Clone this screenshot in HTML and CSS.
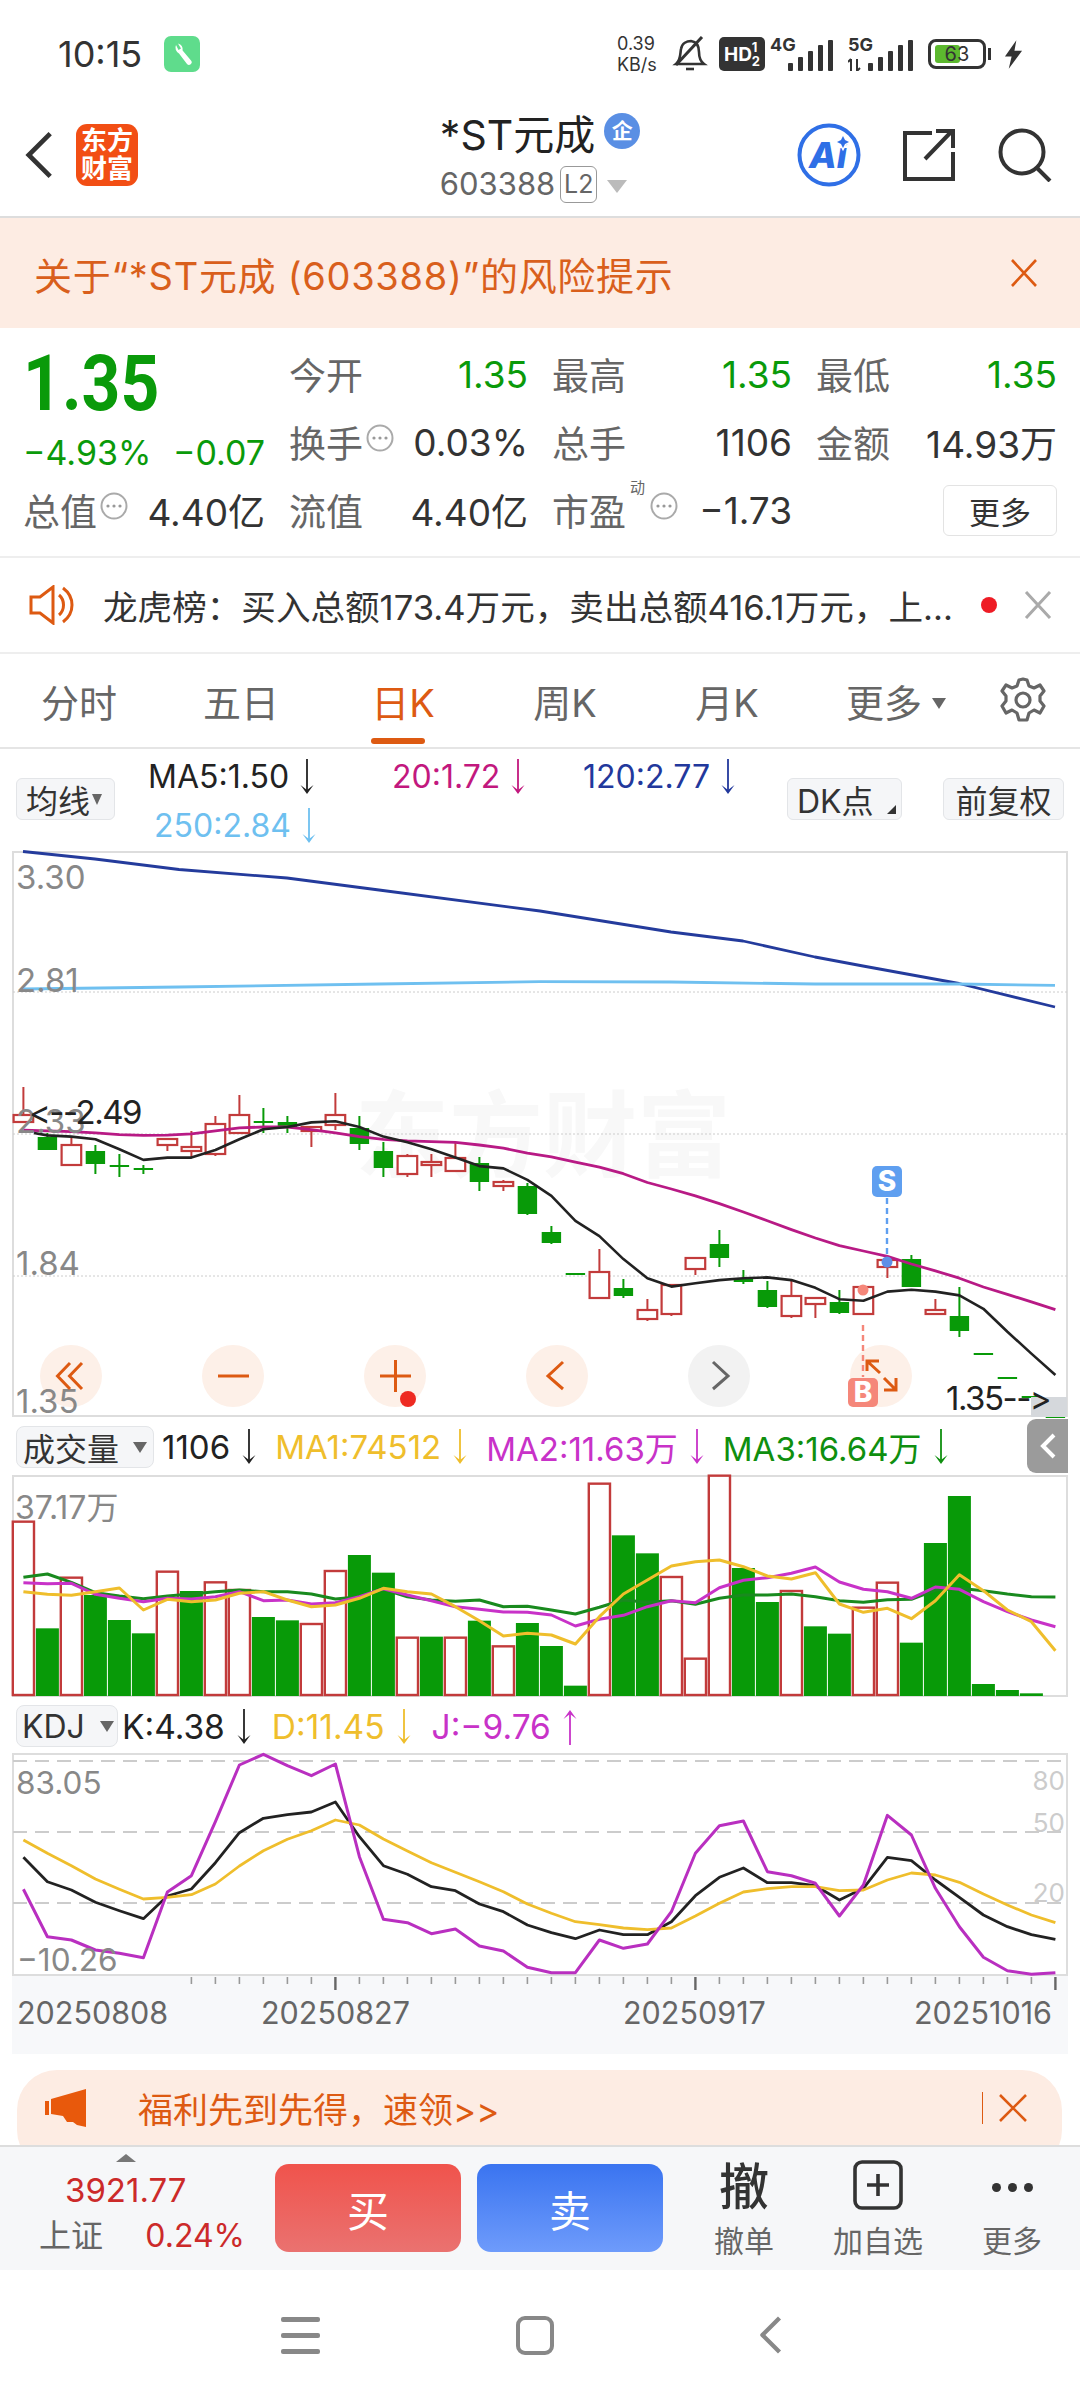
FILE: index.html
```html
<!DOCTYPE html>
<html lang="zh-CN">
<head>
    <meta charset="UTF-8">
    <meta name="viewport" content="width=device-width, initial-scale=1.0">
    <title>*ST元成 603388</title>
    <link rel="stylesheet" href="styles.css">
</head>
<body>
    <svg class="defs" width="0" height="0">
        <symbol id="arw-down" viewBox="0 0 14 36">
            <path d="M7 0V32" stroke="currentColor" stroke-width="1.8" fill="none"/>
            <path d="M0.5 26 L7 31 L13.5 26 L7 35Z" fill="currentColor"/>
        </symbol>
        <symbol id="arw-up" viewBox="0 0 14 36">
            <path d="M7 4V36" stroke="currentColor" stroke-width="1.8" fill="none"/>
            <path d="M0.5 10 L7 5 L13.5 10 L7 1Z" fill="currentColor"/>
        </symbol>
        <symbol id="more-dots" viewBox="0 0 28 28">
            <circle cx="14" cy="14" r="12.5" fill="none" stroke="#aaa" stroke-width="2"/>
            <circle cx="8" cy="14" r="1.6" fill="#999"/><circle cx="14" cy="14" r="1.6" fill="#999"/><circle cx="20" cy="14" r="1.6" fill="#999"/>
        </symbol>
    </svg>

    <!-- 状态栏 -->
    <div class="status-bar">
        <span class="time">10:15</span>
        <svg class="tool-icon" viewBox="0 0 36 36">
            <rect width="36" height="36" rx="7" fill="#5fdc8c"/>
            <path d="M12 9 a6.5 6.5 0 0 0 3 8.5 L23 28 a2.6 2.6 0 0 0 4-3.4 L18.6 14.5 A6.5 6.5 0 0 0 14 7.5 L17 12.5 L14.5 14Z" fill="#fff"/>
        </svg>
        <div class="status-right">
            <div class="speed"><span>0.39</span><span>KB/s</span></div>
            <svg class="st-bell" viewBox="0 0 36 36" fill="none" stroke="#333" stroke-width="2.6">
                <path d="M4 28 C9 24 8 18 9 13 C10 7 15 5 19 5 C25 6 27 11 27 16 C27 21 28 25 32 28Z"/>
                <path d="M14 33H22"/>
                <path d="M4 29 L30 1" stroke-width="3"/>
            </svg>
            <div class="hd-badge"><b>HD</b><i>1<br>2</i></div>
            <svg class="st-signal" viewBox="0 -4 65 38">
                <text x="0" y="14" class="sig-text">4G</text>
                <rect x="18" y="26" width="5" height="8" rx="1"/><rect x="28" y="20" width="5" height="14" rx="1"/><rect x="38" y="14" width="5" height="20" rx="1"/><rect x="48" y="8" width="5" height="26" rx="1"/><rect x="58" y="3" width="5" height="31" rx="1"/>
            </svg>
            <svg class="st-signal st-signal-5g" viewBox="0 -4 67 38">
                <text x="0" y="14" class="sig-text">5G</text>
                <path d="M3 34V22M0 25L3 22M9 22V34M12 31L9 34" stroke="#333" stroke-width="2" fill="none"/>
                <rect x="20" y="26" width="5" height="8" rx="1"/><rect x="30" y="20" width="5" height="14" rx="1"/><rect x="40" y="14" width="5" height="20" rx="1"/><rect x="50" y="8" width="5" height="26" rx="1"/><rect x="60" y="3" width="5" height="31" rx="1"/>
            </svg>
            <div class="battery"><div class="battery-fill"></div><span>63</span></div>
            <svg class="st-bolt" viewBox="0 0 20 30"><path d="M13 0 L1 17 H8 L5 30 L19 11 H11Z" fill="#333"/></svg>
        </div>
    </div>

    <!-- 标题栏 -->
    <div class="top-bar">
        <div class="top-left">
            <svg class="back-icon" viewBox="0 0 30 50"><path d="M27 2 L4 25 L27 48" fill="none" stroke="#333" stroke-width="5"/></svg>
            <div class="brand"><span>东方</span><span>财富</span></div>
        </div>
        <div class="top-title">
            <div class="title-line">*ST元成<span class="qi-badge">企</span></div>
            <div class="code-line">603388<span class="l2">L2</span><span class="code-arrow"></span></div>
        </div>
        <div class="top-right">
            <svg class="ai-icon" viewBox="0 0 64 64">
                <circle cx="32" cy="32" r="29.5" fill="#fff" stroke="#2f6fe6" stroke-width="4"/>
                <text x="12" y="45" class="ai-text">Ai</text>
                <path d="M46 13 L48 17 L52 19 L48 21 L46 25 L44 21 L40 19 L44 17Z" fill="#fff" stroke="#fff" stroke-width="3"/>
                <path d="M46 13 L48 17 L52 19 L48 21 L46 25 L44 21 L40 19 L44 17Z" fill="#2f6fe6"/>
            </svg>
            <svg class="share-icon" viewBox="0 0 54 54" fill="none" stroke="#333" stroke-width="4">
                <path d="M30 5 H3 V51 H51 V24"/>
                <path d="M23 31 L50 3 M34 3 H51 V20"/>
            </svg>
            <svg class="search-icon" viewBox="0 0 54 54" fill="none" stroke="#333" stroke-width="4">
                <circle cx="24" cy="24" r="21.5"/>
                <path d="M39 40 L52 53"/>
            </svg>
        </div>
    </div>

    <!-- 风险提示 -->
    <div class="risk-bar">
        <span>关于“*ST元成 (603388)”的风险提示</span>
        <svg class="risk-close" viewBox="0 0 28 28"><path d="M2 1 L26 27 M26 1 L2 27" stroke="#dd5a12" stroke-width="2.6"/></svg>
    </div>

    <!-- 行情数据 -->
    <div class="quote-grid">
        <div class="price-box">
            <div class="price">1.35</div>
            <div class="price-sub"><span>−4.93%</span><span>−0.07</span></div>
        </div>
        <div class="cell"><label>今开</label><span class="val green">1.35</span></div>
        <div class="cell"><label>最高</label><span class="val green">1.35</span></div>
        <div class="cell"><label>最低</label><span class="val green">1.35</span></div>
        <div class="cell"><label>换手<svg class="dot-icon"><use href="#more-dots"/></svg></label><span class="val">0.03%</span></div>
        <div class="cell"><label>总手</label><span class="val">1106</span></div>
        <div class="cell"><label>金额</label><span class="val">14.93万</span></div>
        <div class="cell"><label>总值<svg class="dot-icon"><use href="#more-dots"/></svg></label><span class="val">4.40亿</span></div>
        <div class="cell"><label>流值</label><span class="val">4.40亿</span></div>
        <div class="cell"><label>市盈<sup>动</sup><svg class="dot-icon"><use href="#more-dots"/></svg></label><span class="val">−1.73</span></div>
        <div class="cell cell-btn"><button class="more-btn">更多</button></div>
    </div>

    <!-- 公告滚动 -->
    <div class="notice-bar">
        <svg class="speaker" viewBox="0 0 46 40" fill="none" stroke="#dd5a12" stroke-width="3">
            <path d="M2 12 H11 L24 2 V38 L11 28 H2Z"/>
            <path d="M30 10 C36 15 36 25 30 30"/>
            <path d="M34 3 C46 12 46 28 34 37"/>
        </svg>
        <span class="notice-text">龙虎榜：买入总额173.4万元，卖出总额416.1万元，上...</span>
        <span class="notice-dot"></span>
        <svg class="notice-close" viewBox="0 0 28 28"><path d="M2 1 L26 27 M26 1 L2 27" stroke="#aaa" stroke-width="3"/></svg>
    </div>

    <!-- 周期切换 -->
    <div class="period-tabs">
        <div class="tab">分时</div>
        <div class="tab">五日</div>
        <div class="tab active"><span>日K</span></div>
        <div class="tab">周K</div>
        <div class="tab">月K</div>
        <div class="tab tab-more">更多<i class="tab-arrow"></i></div>
        <svg class="gear" viewBox="0 0 48 48" fill="none" stroke="#666" stroke-width="3.2" stroke-linejoin="round">
            <path d="M24 2 L28 3 L30 9 L35 11 L41 8 L45 14 L41 19 L41 24 L45 29 L41 36 L35 33 L30 36 L28 43 L20 43 L18 36 L13 33 L7 36 L3 29 L7 24 L7 19 L3 14 L7 8 L13 11 L18 9 L20 3Z"/>
            <circle cx="24" cy="23" r="7"/>
        </svg>
    </div>

    <!-- 均线数值 -->
    <div class="ma-bar">
        <div class="chip chip-ma">均线<i class="chip-arrow"></i></div>
        <div class="ma-vals">
            <span class="ma-item c-black">MA5:1.50<svg class="arw"><use href="#arw-down"/></svg></span>
            <span class="ma-item c-pink">20:1.72<svg class="arw"><use href="#arw-down"/></svg></span>
            <span class="ma-item c-navy">120:2.77<svg class="arw"><use href="#arw-down"/></svg></span>
            <span class="ma-item c-sky ma-last">250:2.84<svg class="arw"><use href="#arw-down"/></svg></span>
        </div>
        <div class="chip chip-dk">DK点<i class="corner"></i></div>
        <div class="chip chip-fq">前复权</div>
    </div>

    <!-- K线图 -->
    <svg class="chart k-chart" viewBox="0 851 1080 566">
        <text x="355" y="1170" class="watermark">东方财富</text>
        <rect x="13" y="852" width="1054" height="564" class="frame"/>
        <path d="M13 992H1067M13 1134H1067M13 1276H1067" class="grid-dot"/>
        <g id="candles"></g>
        <g id="k-lines"></g>

        <path d="M887 1198V1258" class="dash dash-blue"/>
        <rect x="872" y="1166" width="30" height="31" rx="5" fill="#5f9ff0"/>
        <text x="887" y="1191" class="bs-text">S</text>
        <circle cx="887" cy="1262" r="5.5" fill="#5f8fe6"/>
        <circle cx="863" cy="1290" r="5.5" fill="#f5877a"/>

        <g class="zoom-btns">
            <circle cx="71" cy="1376" r="31"/>
            <circle cx="233" cy="1376" r="31"/>
            <circle cx="395" cy="1376" r="31"/>
            <circle cx="557" cy="1376" r="31"/>
            <circle cx="719" cy="1376" r="31" fill="#f2f2f2"/>
            <circle cx="881" cy="1376" r="31"/>
        </g>
        <text x="16" y="889" class="axis">3.30</text>
        <text x="16" y="992" class="axis">2.81</text>
        <text x="16" y="1133" class="axis">2.33</text>
        <text x="16" y="1275" class="axis">1.84</text>
        <text x="16" y="1413" class="axis">1.35</text>
        <text x="29" y="1124" class="mark-text">&lt;--2.49</text>
        <g class="zoom-glyph">
            <path d="M70 1363 L57.5 1376 L70 1389 M82 1363 L69.5 1376 L82 1389"/>
            <path d="M218 1376H249"/>
            <path d="M380 1376H411M395.5 1360V1392"/>
            <path d="M563 1362 L548 1376 L563 1389"/>
            <path d="M713 1362 L728 1376 L713 1389" stroke="#666"/>
            <path d="M867 1361 L880 1373 M867 1371V1361H879 M896 1390 L884 1378 M896 1378V1390H884"/>
        </g>
        <circle cx="408" cy="1399" r="8" fill="#ee2a22"/>
        <path d="M863 1325V1377" class="dash dash-red"/>
        <rect x="848" y="1378" width="30" height="29" rx="5" fill="#f5877a"/>
        <text x="863" y="1402" class="bs-text">B</text>

        <rect x="1031" y="1397" width="36" height="20" fill="#d5d8dc"/>
        <text x="946" y="1410" class="mark-text">1.35--&gt;</text>
    </svg>

    <!-- 成交量 -->
    <div class="index-bar vol-bar">
        <div class="chip chip-vol">成交量<i class="chip-arrow"></i></div>
        <span class="iv c-black iv-num">1106<svg class="arw"><use href="#arw-down"/></svg></span>
        <span class="iv c-yellow">MA1:74512<svg class="arw"><use href="#arw-down"/></svg></span>
        <span class="iv c-purple">MA2:11.63万<svg class="arw"><use href="#arw-down"/></svg></span>
        <span class="iv c-green">MA3:16.64万<svg class="arw"><use href="#arw-down"/></svg></span>
        <div class="side-tab"><svg viewBox="0 0 16 26"><path d="M14 2 L3 13 L14 24" fill="none" stroke="#fff" stroke-width="4"/></svg></div>
    </div>
    <svg class="chart vol-chart" viewBox="0 1475 1080 222">
        <rect x="13" y="1476" width="1054" height="220" class="frame"/>
        <g id="vol-bars"></g>
        <g id="vol-lines"></g>
        <text x="15" y="1519" class="axis-vol">37.17万</text>
    </svg>

    <!-- KDJ -->
    <div class="index-bar kdj-bar">
        <div class="chip chip-kdj">KDJ<i class="chip-arrow"></i></div>
        <span class="iv c-black iv-k">K:4.38<svg class="arw"><use href="#arw-down"/></svg></span>
        <span class="iv c-yellow">D:11.45<svg class="arw"><use href="#arw-down"/></svg></span>
        <span class="iv c-purple">J:−9.76<svg class="arw"><use href="#arw-up"/></svg></span>
    </div>
    <svg class="chart kdj-chart" viewBox="0 1753 1080 301">
        <rect x="12" y="1976" width="1056" height="78" fill="#f7f8fa"/>
        <rect x="13" y="1754" width="1054" height="221" class="frame"/>
        <path d="M13 1761H1067M13 1832H1067M13 1903H1067" class="grid-dash"/>
        <g id="kdj-lines"></g>
        <g id="kdj-ticks"></g>
        <text x="16" y="1794" class="axis-sm">83.05</text>
        <text x="17" y="1971" class="axis-sm">−10.26</text>
        <text x="1065" y="1790" class="axis-r">80</text>
        <text x="1065" y="1832" class="axis-r">50</text>
        <text x="1065" y="1902" class="axis-r">20</text>
        <text x="17" y="2024" class="date">20250808</text>
        <text x="261" y="2024" class="date">20250827</text>
        <text x="623" y="2024" class="date">20250917</text>
        <text x="914" y="2024" class="date">20251016</text>
    </svg>

    <!-- 活动条 -->
    <div class="promo-wrap">
        <div class="promo">
            <svg class="promo-icon" viewBox="0 0 42 38">
                <path d="M0 12H4V26H0Z M6 10 L41 0 V38 L32 36 L28 33 L22 33 L18 27 L6 25Z" fill="#e8590c"/>
            </svg>
            <span class="promo-text">福利先到先得，速领&gt;&gt;</span>
            <i class="promo-sep"></i>
            <svg class="promo-close" viewBox="0 0 30 28"><path d="M2 1 L28 27 M28 1 L2 27" stroke="#dd5a12" stroke-width="2.6"/></svg>
        </div>
    </div>

    <!-- 底部操作 -->
    <div class="footer-bar">
        <div class="index-quote">
            <i class="up-tri"></i>
            <div class="index-num">3921.77</div>
            <div class="index-line"><span>上证</span><b>0.24%</b></div>
        </div>
        <button class="trade buy">买</button>
        <button class="trade sell">卖</button>
        <div class="action">
            <div class="action-big">撤</div>
            <span>撤单</span>
        </div>
        <div class="action">
            <svg class="action-svg" viewBox="0 0 50 50" fill="none" stroke="#333" stroke-width="3.6">
                <rect x="2" y="2" width="46" height="46" rx="7"/>
                <path d="M14 25H36M25 14V36"/>
            </svg>
            <span>加自选</span>
        </div>
        <div class="action">
            <div class="action-dots"><i></i><i></i><i></i></div>
            <span>更多</span>
        </div>
    </div>

    <!-- 系统导航 -->
    <div class="nav-bar">
        <div class="nav-menu"><i></i><i></i><i></i></div>
        <div class="nav-home"></div>
        <svg class="nav-back" viewBox="0 0 24 40"><path d="M22 2 L4 20 L22 38" fill="none" stroke="#888" stroke-width="4.5" stroke-linejoin="round"/></svg>
    </div>

    <script src="chart.js"></script>
</body>
</html>
```

FILE: styles.css
```css
* {
    box-sizing: border-box;
}
html, body {
    margin: 0;
    padding: 0;
}
body {
    width: 1080px;
    height: 2400px;
    overflow: hidden;
    background: #fff;
    color: #333;
    font-family: Inter, "Noto Sans CJK SC", sans-serif;
}
.defs {
    position: absolute;
}
i {
    font-style: normal;
}

/* 状态栏 */
.status-bar {
    height: 100px;
    display: flex;
    align-items: center;
    padding: 8px 57px 0 58px;
}
.time {
    width: 87px;
    font-size: 36px;
    color: #333;
    white-space: nowrap;
}
.tool-icon {
    width: 36px;
    height: 36px;
    margin-left: 19px;
}
.status-right {
    margin-left: auto;
    display: flex;
    align-items: center;
}
.speed {
    display: flex;
    flex-direction: column;
    font-size: 18px;
    line-height: 21px;
    width: 43px;
    white-space: nowrap;
}
.st-bell {
    width: 36px;
    height: 36px;
    margin-left: 12px;
}
.hd-badge {
    width: 46px;
    height: 34px;
    margin-left: 11px;
    background: #333;
    border-radius: 5px;
    color: #fff;
    display: flex;
    align-items: center;
    justify-content: center;
    font-size: 19px;
}
.hd-badge i {
    font-size: 13px;
    line-height: 14px;
    font-weight: 700;
}
.st-signal {
    width: 65px;
    height: 38px;
    margin: -4px 0 0 5px;
    fill: #333;
}
.st-signal-5g {
    width: 67px;
    margin-left: 13px;
}
.sig-text {
    font-size: 18px;
    font-weight: 700;
}
.battery {
    position: relative;
    width: 58px;
    height: 30px;
    margin-left: 13px;
    border: 3px solid #333;
    border-radius: 8px;
    display: flex;
    align-items: center;
    justify-content: center;
    font-size: 20px;
}
.battery::after {
    content: "";
    position: absolute;
    right: -8px;
    top: 6px;
    width: 3px;
    height: 12px;
    background: #333;
}
.battery-fill {
    position: absolute;
    left: 4px;
    top: 3px;
    bottom: 3px;
    width: 25px;
    background: #5cb82e;
    border-radius: 3px;
}
.battery span {
    position: relative;
}
.st-bolt {
    width: 19px;
    height: 29px;
    margin-left: 18px;
}

/* 标题栏 */
.top-bar {
    height: 118px;
    display: grid;
    grid-template-columns: 1fr auto 1fr;
    border-bottom: 2px solid #ddd;
}
.top-left {
    display: flex;
    align-items: center;
    padding: 0 0 6px 25px;
}
.back-icon {
    width: 28px;
    height: 50px;
}
.brand {
    width: 62px;
    height: 62px;
    margin-left: 23px;
    background: #f24e14;
    border-radius: 11px;
    color: #fff;
    font-size: 26px;
    font-weight: 700;
    line-height: 28px;
    display: flex;
    flex-direction: column;
    align-items: center;
    justify-content: center;
}
.top-title {
    padding-top: 13px;
}
.title-line {
    display: flex;
    align-items: center;
    font-size: 41px;
    line-height: 44px;
    color: #222;
}
.qi-badge {
    width: 36px;
    height: 36px;
    margin: -8px 0 0 9px;
    border-radius: 50%;
    background: #5a8fe4;
    color: #fff;
    font-size: 21px;
    font-weight: 700;
    line-height: 36px;
    text-align: center;
}
.code-line {
    display: flex;
    align-items: center;
    margin-top: 8px;
    font-size: 31px;
    line-height: 38px;
    color: #666;
}
.l2 {
    width: 37px;
    height: 37px;
    margin-left: 5px;
    border: 1px solid #999;
    border-radius: 6px;
    font-size: 25px;
    line-height: 35px;
    text-align: center;
}
.code-arrow {
    margin: 4px 0 0 10px;
    border-left: 10px solid transparent;
    border-right: 10px solid transparent;
    border-top: 13px solid #bbb;
}
.top-right {
    display: flex;
    align-items: center;
    justify-content: flex-end;
    padding: 0 28px 6px 0;
}
.ai-icon {
    width: 64px;
    height: 64px;
}
.ai-text {
    font-size: 36px;
    font-weight: 800;
    font-style: italic;
    fill: #2f6fe6;
}
.share-icon {
    width: 54px;
    height: 54px;
    margin-left: 41px;
}
.search-icon {
    width: 54px;
    height: 54px;
    margin-left: 42px;
}

/* 风险提示 */
.risk-bar {
    height: 110px;
    padding: 0 42px 0 34px;
    background: #fdece3;
    color: #d95f1c;
    font-size: 38px;
    letter-spacing: 0.7px;
    display: flex;
    align-items: center;
    justify-content: space-between;
}
.risk-close {
    width: 28px;
    height: 28px;
}

/* 行情数据 */
.quote-grid {
    height: 230px;
    padding: 12px 22px 0 23px;
    display: grid;
    grid-template-columns: 242px 239px 240px 241px;
    grid-auto-rows: 68px;
    column-gap: 24px;
    border-bottom: 2px solid #eee;
}
.price-box {
    grid-row: span 2;
}
.price {
    font-family: Roboto, sans-serif;
    font-size: 77px;
    font-weight: 700;
    line-height: 88px;
    color: #0a9a0a;
    transform: scaleX(0.88);
    transform-origin: left center;
}
.price-sub {
    display: flex;
    justify-content: space-between;
    font-size: 34px;
    line-height: 50px;
    color: #0a9a0a;
}
.cell {
    display: flex;
    align-items: center;
    justify-content: space-between;
}
.cell label {
    display: flex;
    align-items: center;
    font-size: 37px;
    color: #666;
    position: relative;
}
.cell sup {
    position: absolute;
    left: 78px;
    top: -4px;
    font-size: 15px;
    line-height: 18px;
}
.cell sup + .dot-icon {
    margin-left: 24px;
}
.dot-icon {
    width: 28px;
    height: 28px;
    margin: -8px 0 0 3px;
}
.val {
    font-size: 37px;
    color: #333;
}
.green {
    color: #0a9a0a;
}
.cell-btn {
    justify-content: flex-end;
}
.more-btn {
    width: 114px;
    height: 51px;
    padding: 0;
    background: #fff;
    border: 1px solid #e3e3e3;
    border-radius: 6px;
    color: #333;
    font-family: inherit;
    font-size: 31px;
}

/* 公告 */
.notice-bar {
    height: 96px;
    padding: 0 28px 0 29px;
    display: flex;
    align-items: center;
    border-bottom: 2px solid #eee;
}
.speaker {
    width: 46px;
    height: 40px;
}
.notice-text {
    margin-left: 28px;
    width: 878px;
    font-size: 34.6px;
    color: #333;
    white-space: nowrap;
}
.notice-dot {
    width: 16px;
    height: 16px;
    background: #ee1c25;
    border-radius: 50%;
}
.notice-close {
    width: 28px;
    height: 28px;
    margin-left: auto;
}

/* 周期切换 */
.period-tabs {
    height: 95px;
    display: grid;
    grid-template-columns: repeat(6, 162px) 1fr;
    align-items: center;
    border-bottom: 2px solid #e5e5e5;
}
.tab {
    text-align: center;
    font-size: 38px;
    color: #666;
    padding-right: 4px;
}
.tab-more {
    padding: 0 0 0 10px;
    white-space: nowrap;
}
.tab.active {
    color: #dd5a12;
}
.tab.active span {
    position: relative;
    display: inline-block;
}
.tab.active span::after {
    content: "";
    position: absolute;
    left: 0;
    bottom: -16px;
    width: 54px;
    height: 6px;
    border-radius: 3px;
    background: #dd5a12;
}
.tab-arrow {
    display: inline-block;
    margin: 0 0 8px 10px;
    border-left: 7px solid transparent;
    border-right: 7px solid transparent;
    border-top: 11px solid #666;
}
.gear {
    width: 48px;
    height: 48px;
    margin-left: 27px;
}

/* 均线数值 */
.ma-bar {
    height: 102px;
    padding: 0 16px;
    display: flex;
    align-items: flex-start;
    position: relative;
}
.chip {
    height: 42px;
    margin-top: 29px;
    background: #f5f6f8;
    border: 1px solid #e3e5e8;
    border-radius: 6px;
    color: #333;
    font-size: 32px;
    display: flex;
    align-items: center;
    flex: none;
    white-space: nowrap;
}
.chip-ma {
    width: 99px;
    padding-left: 9px;
}
.chip-arrow {
    margin-left: 6px;
    border-left: 7px solid transparent;
    border-right: 7px solid transparent;
    border-top: 11px solid #666;
}
.chip-ma .chip-arrow {
    margin-left: 2px;
    border-left-width: 5px;
    border-right-width: 5px;
}
.ma-vals {
    width: 639px;
    margin-left: 33px;
    padding-top: 3px;
    display: grid;
    grid-template-columns: 244px 191px 1fr;
    grid-auto-rows: 49px;
}
.ma-item, .iv {
    display: flex;
    align-items: center;
    font-size: 32px;
    white-space: nowrap;
}
.ma-last {
    padding-left: 6px;
    grid-column: 1;
}
.arw {
    width: 14px;
    height: 36px;
    margin-left: 11px;
    flex: none;
}
.c-black { color: #222; }
.c-pink { color: #c2187e; }
.c-navy { color: #22389c; }
.c-sky { color: #6ec0f0; }
.c-yellow { color: #efbe2c; }
.c-purple { color: #c832c8; }
.c-green { color: #0f8f0f; }
.chip-dk {
    width: 115px;
    padding-left: 9px;
    position: relative;
}
.corner {
    position: absolute;
    right: 5px;
    bottom: 5px;
    border-left: 9px solid transparent;
    border-bottom: 9px solid #333;
}
.chip-fq {
    width: 121px;
    margin-left: 41px;
    justify-content: center;
}

/* 图表 */
.chart {
    display: block;
    width: 1080px;
    overflow: visible;
}
.k-chart { height: 566px; }
.vol-chart { height: 222px; }
.kdj-chart { height: 301px; }
.frame {
    fill: none;
    stroke: #ddd;
    stroke-width: 2;
}
.grid-dot {
    stroke: #ccc;
    stroke-width: 1;
    stroke-dasharray: 2 2;
    fill: none;
}
.grid-dash {
    stroke: #ccc;
    stroke-width: 2;
    stroke-dasharray: 14 8;
    fill: none;
}
.watermark {
    font-size: 94px;
    font-weight: 700;
    fill: #f8f8f8;
}
.axis {
    font-size: 33px;
    fill: #888;
}
.axis-sm {
    font-size: 31.5px;
    fill: #888;
}
.axis-vol {
    font-size: 32px;
    fill: #888;
}
.axis-r {
    font-size: 26px;
    fill: #ccc;
    text-anchor: end;
}
.mark-text {
    font-size: 33px;
    letter-spacing: -1.5px;
    fill: #222;
}
.date {
    font-size: 30.5px;
    fill: #666;
}
.bs-text {
    font-size: 28px;
    font-weight: 800;
    fill: #fff;
    text-anchor: middle;
}
.dash {
    fill: none;
    stroke-width: 2.4;
    stroke-dasharray: 6 4;
}
.dash-blue { stroke: #5f9ff0; }
.dash-red { stroke: #f5877a; }
.zoom-btns circle:not([fill]) {
    fill: #fdf0e8;
}
.zoom-glyph path {
    fill: none;
    stroke-width: 3;
}
.zoom-glyph path:not([stroke]) {
    stroke: #dd5a12;
}

/* 指标栏 */
.index-bar {
    padding-left: 16px;
    display: flex;
    align-items: flex-start;
    position: relative;
}
.vol-bar { height: 58px; }
.kdj-bar { height: 56px; }
.index-bar .chip {
    margin-top: 9px;
    border-radius: 8px;
}
.kdj-bar .chip {
    margin-top: 8px;
}
.chip-vol {
    width: 138px;
    padding-left: 6px;
}
.chip-vol .chip-arrow {
    margin-left: 14px;
}
.chip-kdj {
    width: 102px;
    padding-left: 5px;
}
.chip-kdj .chip-arrow {
    margin-left: 15px;
}
.iv {
    height: 36px;
    margin-top: 12px;
    font-size: 33.5px;
    margin-left: 21px;
}
.iv .arw {
    margin-left: 12px;
}
.vol-bar .iv {
    font-size: 33px;
    margin-left: 19px;
}
.vol-bar .iv-num {
    margin-left: 8px;
}
.iv-k {
    margin-left: 4px;
}
.side-tab {
    position: absolute;
    right: 12px;
    top: 2px;
    width: 41px;
    height: 54px;
    background: #9b9b9b;
    border-radius: 9px 0 0 9px;
    display: flex;
    align-items: center;
    justify-content: center;
}
.side-tab svg {
    width: 16px;
    height: 26px;
}

/* 活动条 */
.promo-wrap {
    height: 91px;
    padding: 16px 18px 0 17px;
    overflow: hidden;
}
.promo {
    height: 100px;
    padding: 0 34px 25px 28px;
    background: #fdece3;
    border-radius: 40px;
    display: flex;
    align-items: center;
}
.promo-icon {
    width: 42px;
    height: 38px;
}
.promo-text {
    margin-left: 51px;
    font-size: 35px;
    color: #dd5a12;
    white-space: nowrap;
}
.promo-sep {
    width: 1px;
    height: 32px;
    margin-left: auto;
    background: #dd5a12;
}
.promo-close {
    width: 30px;
    height: 28px;
    margin-left: 15px;
}

/* 底部操作 */
.footer-bar {
    height: 125px;
    background: #f6f7f9;
    border-top: 2px solid #ddd;
    display: flex;
    align-items: flex-start;
    position: relative;
}
.index-quote {
    width: 275px;
    padding: 7px 30px 0 39px;
    flex: none;
}
.up-tri {
    display: block;
    width: 0;
    margin: 0 0 0 77px;
    border-left: 10px solid transparent;
    border-right: 10px solid transparent;
    border-bottom: 8px solid #777;
}
.index-num {
    margin: 6px 0 0 26px;
    font-size: 33px;
    line-height: 44px;
    color: #cc2a2a;
}
.index-line {
    display: flex;
    justify-content: space-between;
    align-items: center;
    margin-top: 2px;
    line-height: 44px;
    font-size: 32px;
    color: #666;
}
.index-line b {
    font-weight: 400;
    color: #cc2a2a;
}
.trade {
    width: 186px;
    height: 88px;
    margin: 17px 0 0 0;
    padding: 0;
    border: 0;
    border-radius: 14px;
    color: #fff;
    font-family: inherit;
    font-size: 42px;
}
.buy {
    background: linear-gradient(#f0534c, #ea7270);
}
.sell {
    margin-left: 16px;
    margin-right: 14px;
    background: linear-gradient(#3a74f0, #6e9bfb);
}
.action {
    width: 134px;
    height: 123px;
    display: flex;
    flex-direction: column;
    align-items: center;
    font-size: 30px;
    color: #666;
}
.action span {
    position: absolute;
    top: 70px;
}
.action-big {
    margin-top: 10px;
    font-size: 50px;
    line-height: 60px;
    font-weight: 500;
    color: #333;
}
.action-svg {
    width: 50px;
    height: 50px;
    margin-top: 13px;
}
.action-dots {
    margin-top: 36px;
    display: flex;
    gap: 7px;
}
.action-dots i {
    width: 9px;
    height: 9px;
    border-radius: 50%;
    background: #333;
}

/* 系统导航 */
.nav-bar {
    height: 130px;
    display: flex;
    align-items: center;
    padding: 0 0 0 281px;
}
.nav-menu {
    width: 39px;
    display: flex;
    flex-direction: column;
    gap: 11px;
}
.nav-menu i {
    height: 5px;
    border-radius: 2px;
    background: #888;
}
.nav-home {
    width: 38px;
    height: 39px;
    margin-left: 196px;
    border: 4px solid #888;
    border-radius: 9px;
}
.nav-back {
    width: 24px;
    height: 38px;
    margin-left: 204px;
}
```

FILE: chart.js
```js
// 蜡烛图和指标线的数据都是按页面坐标记录的
const RED = '#c23b3b';
const GREEN = '#089a08';
const cx = i => 23.4 + 24 * i;

function setGroup(id, html) {
    document.getElementById(id).innerHTML = html;
}

function line(pts, color, width) {
    const p = pts.map(q => q[0].toFixed(1) + ',' + q[1].toFixed(1)).join(' ');
    return `<polyline points="${p}" fill="none" stroke="${color}" stroke-width="${width}" stroke-linejoin="round"/>`;
}

// 从第 start 根开始，每根一个值
function series(vals, start, toY) {
    return vals.map((v, i) => [cx(i + start), toY(v)]);
}

// [r/g, 上影, 实体顶, 实体底, 下影]
const candles = [
    ['r', 1087, 1115, 1122, 1122], ['g', 1133, 1137, 1150, 1150], ['r', 1138, 1145, 1165, 1165],
    ['g', 1145, 1151, 1164, 1174], ['g', 1154, 1165, 1167, 1177], ['g', 1165, 1168, 1170, 1174],
    ['r', 1139, 1139, 1145, 1151], ['r', 1131, 1147, 1151, 1157], ['r', 1116, 1124, 1154, 1156],
    ['r', 1095, 1115, 1133, 1133], ['g', 1108, 1121, 1123, 1133], ['g', 1116, 1122, 1127, 1133],
    ['r', 1127, 1127, 1131, 1147], ['r', 1093, 1115, 1125, 1130], ['g', 1116, 1128, 1144, 1150],
    ['g', 1142, 1151, 1168, 1177], ['r', 1154, 1156, 1174, 1177], ['r', 1154, 1162, 1165, 1177],
    ['r', 1142, 1158, 1171, 1171], ['g', 1157, 1163, 1182, 1191], ['r', 1180, 1182, 1186, 1191],
    ['g', 1183, 1186, 1214, 1215], ['g', 1226, 1232, 1243, 1244], ['g', 1273, 1273, 1275, 1275],
    ['r', 1249, 1272, 1298, 1298], ['g', 1279, 1288, 1296, 1298], ['r', 1299, 1310, 1319, 1321],
    ['r', 1285, 1285, 1314, 1316], ['r', 1258, 1258, 1269, 1275], ['g', 1230, 1244, 1258, 1267],
    ['g', 1270, 1279, 1282, 1284], ['g', 1281, 1290, 1307, 1308], ['r', 1280, 1296, 1316, 1318],
    ['r', 1298, 1298, 1304, 1318], ['g', 1290, 1302, 1313, 1314], ['r', 1287, 1287, 1314, 1314],
    ['r', 1260, 1260, 1267, 1278], ['g', 1255, 1259, 1287, 1287], ['r', 1299, 1310, 1314, 1314],
    ['g', 1287, 1316, 1331, 1337], ['g', 1353, 1353, 1355, 1355], ['g', 1377, 1377, 1379, 1379],
    ['g', 1396, 1396, 1398, 1398], ['g', 1416, 1416, 1418, 1418]
];

let html = '';
candles.forEach((c, i) => {
    const x = cx(i);
    const color = c[0] === 'r' ? RED : GREEN;
    if (c[1] < c[4]) {
        html += `<path d="M${x} ${c[1]}V${c[4]}" stroke="${color}" stroke-width="2"/>`;
    }
    if (c[0] === 'r') {
        html += `<rect x="${x - 9.8}" y="${c[2]}" width="19.6" height="${c[3] - c[2]}" fill="#fff" stroke="${RED}" stroke-width="2.2"/>`;
    } else {
        html += `<rect x="${x - 9.7}" y="${c[2]}" width="19.4" height="${c[3] - c[2]}" fill="${GREEN}"/>`;
    }
});
setGroup('candles', html);

// K线图上的均线
const ky = v => 840 + v / 2.613;
const ma5 = [772, 775, 782, 808, 836, 830, 830, 810, 782, 756, 750, 738, 735, 750, 775, 790, 808, 830, 852, 858, 888,
    930, 995, 1035, 1095, 1145, 1167, 1158, 1150, 1145, 1143, 1150, 1170, 1200, 1204, 1180, 1175, 1180, 1190, 1225, 1285, 1342, 1398];
const ma20 = [758, 760, 762, 765, 770, 772, 771, 768, 760, 752, 750, 750, 757, 765, 775, 782, 786, 788, 790, 797, 805, 818,
    828, 842, 855, 872, 895, 912, 930, 950, 972, 995, 1018, 1040, 1060, 1074, 1088, 1108, 1126, 1145, 1168, 1187, 1207, 1227];
const ma120 = [[23, 851.5], [95, 859], [179, 869.5], [287, 878], [379, 890], [540, 911], [671, 932], [743, 941], [815, 957], [863, 966], [959, 983.5], [1055, 1007]];
const ma250 = [[23, 989], [179, 987], [379, 984], [540, 981.6], [671, 982], [815, 984], [959, 984], [1055, 985.4]];
setGroup('k-lines',
    line(ma120, '#243b9c', 2.8) +
    line(ma250, '#6fc0f0', 2.8) +
    line(series(ma20, 0, ky), '#b81a85', 2.8) +
    line([[34, 1133]].concat(series(ma5, 1, ky)), '#222', 2.6));

// 成交量柱（顶部位置，下标同蜡烛）
const vy = v => 1410 + v / 3;
const volTops = [335, 655, 503, 555, 630, 670, 485, 543, 517, 540, 621, 631, 642, 483, 435, 488, 683, 680, 683, 632, 709, 639,
    708, 827, 221, 376, 430, 501, 746, 197, 474, 576, 543, 649, 671, 593, 518, 698, 399, 258, 822, 840, 850];
const volRed = [0, 2, 6, 8, 9, 12, 13, 16, 18, 20, 24, 27, 28, 29, 32, 35, 36];
html = '';
volTops.forEach((t, i) => {
    const x = cx(i);
    const y = vy(t);
    if (volRed.includes(i)) {
        html += `<rect x="${x - 10.6}" y="${y}" width="21.2" height="${1695 - y}" fill="#fff" stroke="${RED}" stroke-width="2.4"/>`;
    } else {
        html += `<rect x="${x - 11.5}" y="${y}" width="23" height="${1696 - y}" fill="${GREEN}"/>`;
    }
});
setGroup('vol-bars', html);

const vol3 = [502, 492, 517, 548, 558, 566, 558, 552, 545, 540, 545, 545, 552, 567, 560, 538, 560, 570, 574, 570, 590, 589,
    600, 612, 592, 570, 577, 572, 583, 565, 555, 555, 552, 560, 572, 577, 569, 568, 540, 535, 542, 552, 560, 561];
const vol2 = [518, 521, 520, 553, 565, 575, 565, 567, 560, 545, 572, 570, 582, 578, 560, 536, 555, 572, 590, 598, 606, 607,
    615, 648, 628, 616, 590, 572, 578, 533, 511, 503, 490, 471, 516, 538, 545, 565, 531, 538, 575, 605, 630, 650];
const vol1 = [545, 553, 556, 545, 534, 600, 568, 575, 570, 550, 545, 570, 590, 585, 565, 535, 545, 552, 590, 632, 678, 670,
    675, 702, 620, 552, 510, 468, 455, 450, 470, 498, 507, 488, 582, 607, 595, 626, 572, 494, 542, 600, 635, 722];
setGroup('vol-lines',
    line(series(vol3, 0, vy), '#198a1e', 3) +
    line(series(vol2, 0, vy), '#c832c8', 3) +
    line(series(vol1, 0, vy), '#efbe2c', 3));

// KDJ
const jy = v => 1700 + v / 3;
const kLine = [472, 545, 570, 607, 632, 656, 588, 567, 488, 398, 355, 344, 336, 306, 410, 497, 523, 560, 572, 612, 635, 675,
    698, 716, 690, 704, 704, 665, 587, 532, 504, 548, 548, 557, 600, 565, 472, 482, 540, 592, 645, 680, 704, 718];
const dLine = [420, 460, 497, 537, 568, 597, 592, 584, 552, 498, 452, 418, 392, 360, 375, 417, 453, 488, 517, 545, 575, 612,
    640, 665, 674, 684, 689, 684, 648, 610, 576, 566, 560, 560, 572, 570, 540, 519, 525, 547, 582, 615, 645, 668];
const jLine = [568, 710, 720, 750, 760, 773, 576, 527, 365, 195, 163, 197, 227, 192, 470, 658, 668, 701, 687, 738, 753, 802,
    818, 818, 720, 745, 732, 635, 460, 377, 363, 515, 527, 550, 648, 555, 346, 405, 565, 680, 772, 812, 823, 818];
setGroup('kdj-lines',
    line(series(kLine, 0, jy), '#222', 2.8) +
    line(series(dLine, 0, jy), '#efbe2c', 2.8) +
    line(series(jLine, 0, jy), '#b92fc0', 3));

// 时间轴刻度
html = '';
for (let i = 7; i < 44; i++) {
    const big = i === 13 || i === 28 || i === 43;
    html += `<path d="M${cx(i)} 1977V${big ? 1990 : 1984}" stroke="${big ? '#666' : '#999'}" stroke-width="${big ? 2.4 : 1.6}"/>`;
}
setGroup('kdj-ticks', html);
```
